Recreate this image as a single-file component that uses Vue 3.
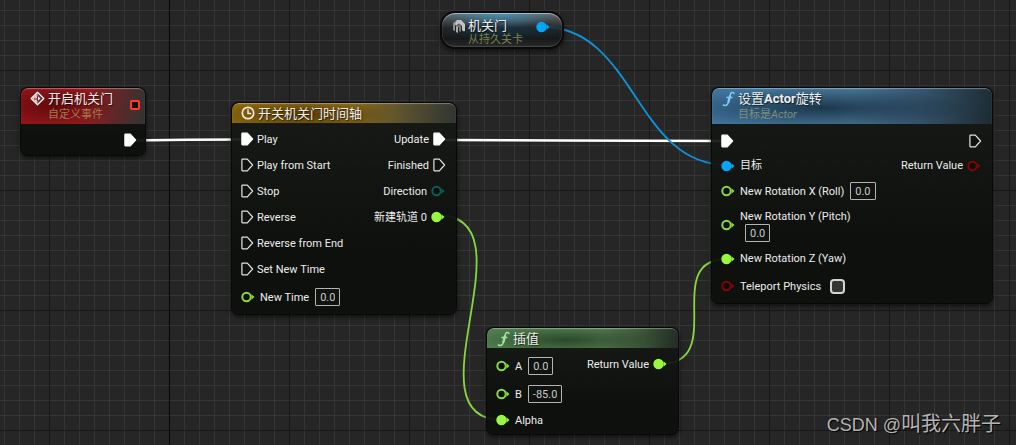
<script setup>
import { ref } from 'vue'

const wires = [
  { kind: 'exec', d: 'M130 140.500C170 140 206 139.500 246 139.500' },
  { kind: 'exec', d: 'M440 140C540 140 620 141 726 141' },
  { kind: 'object', d: 'M543 27C635 27 635 165 727 165' },
  { kind: 'float', d: 'M437 215C537 215 404 420 502 420' },
  { kind: 'float', d: 'M660 364C729 364 660 259 727 259' },
]

const nodes = ref([
  {
    id: 'event',
    title: [{ text: '开启机关门' }],
    subtitle: '自定义事件',
    icon: 'event',
    delegate: true,
    inputs: [],
    outputs: [{ kind: 'exec', linked: true }],
  },
  {
    id: 'timeline',
    title: [{ text: '开关机关门时间轴' }],
    icon: 'clock',
    inputs: [
      { kind: 'exec', linked: true, label: 'Play' },
      { kind: 'exec', label: 'Play from Start' },
      { kind: 'exec', label: 'Stop' },
      { kind: 'exec', label: 'Reverse' },
      { kind: 'exec', label: 'Reverse from End' },
      { kind: 'exec', label: 'Set New Time' },
      { kind: 'float', label: 'New Time', value: '0.0' },
    ],
    outputs: [
      { kind: 'exec', linked: true, label: 'Update' },
      { kind: 'exec', label: 'Finished' },
      { kind: 'enum', label: 'Direction' },
      { kind: 'float', linked: true, label: '新建轨道 0' },
    ],
  },
  {
    id: 'rotate',
    title: [{ text: '设置' }, { text: 'Actor', strong: true }, { text: '旋转' }],
    subtitle: '目标是',
    subject: 'Actor',
    icon: 'function',
    inputs: [
      { kind: 'exec', linked: true },
      { kind: 'object', linked: true, label: '目标' },
      { kind: 'float', label: 'New Rotation X (Roll)', value: '0.0' },
      { kind: 'float', label: 'New Rotation Y (Pitch)', value: '0.0', stacked: true },
      { kind: 'float', linked: true, label: 'New Rotation Z (Yaw)' },
      { kind: 'bool', label: 'Teleport Physics', checked: false },
    ],
    outputs: [{ kind: 'exec' }, { kind: 'bool', label: 'Return Value' }],
  },
  {
    id: 'lerp',
    title: [{ text: '插值' }],
    icon: 'function',
    inputs: [
      { kind: 'float', label: 'A', value: '0.0' },
      { kind: 'float', label: 'B', value: '-85.0' },
      { kind: 'float', linked: true, label: 'Alpha' },
    ],
    outputs: [{ kind: 'float', linked: true, label: 'Return Value' }],
  },
])

const fieldId = (node, i) => `${node.id}-${i}`
</script>

<template>
  <main class="graph">
    <svg class="wires" aria-hidden="true">
      <path v-for="w in wires" :key="w.d" :d="w.d" :class="['wire', w.kind]" />
    </svg>

    <section class="variable">
      <svg class="variable-icon" viewBox="0 0 14 15" aria-hidden="true">
        <path d="M1 4L5 1L8 3V6L5 4L3 6V12L1 11Z" fill="#8b8b8b" />
        <path d="M5 1L9 1L13 5V12L10 13V7L7 4L4 7L3 5Z" fill="#c2c2c2" />
        <path d="M5 7L7 5L9 7V13L7 12V8L5 9Z" fill="#777" />
        <path d="M4 7V13L6 14V8Z" fill="#aaa" />
        <path d="M8 14L10 11L13 14Z" fill="#222" />
      </svg>
      <div class="variable-text">
        <h2 class="title">机关门</h2>
        <p class="subtitle">从持久关卡</p>
      </div>
      <svg class="pin data object linked" viewBox="0 0 14 12" aria-hidden="true">
        <circle cx="5.500" cy="6" r="4.200" />
        <path d="M10.500 3.300L13.500 6L10.500 8.700Z" />
      </svg>
    </section>

    <section v-for="node in nodes" :key="node.id" :class="['node', node.id]">
      <header class="head">
        <svg v-if="node.icon === 'event'" class="icon event-icon" viewBox="0 0 15 15" aria-hidden="true">
          <path d="M7.500 1.200L13.800 7.500L7.500 13.800L1.200 7.500Z" fill="#5c2a2c" stroke="#eee" stroke-width="1.400" stroke-linejoin="round" />
          <path d="M7.500 2V13L2 7.500Z" fill="#d8c8c8" />
          <path d="M4 7.500H7V5L11 7.500L7 10V8.500H4Z" fill="#7c1c20" />
          <path d="M8 5.300L10.500 7.500L8 9.700Z" fill="#f2e8e8" />
        </svg>
        <svg v-else-if="node.icon === 'clock'" class="icon clock-icon" viewBox="0 0 14 14" aria-hidden="true">
          <circle cx="7" cy="7" r="5.700" fill="none" stroke="#eee9dc" stroke-width="1.700" />
          <path d="M7 3.300V7.400H10.200" fill="none" stroke="#eee9dc" stroke-width="1.500" />
        </svg>
        <svg v-else class="icon function-icon" viewBox="0 0 13 16" aria-hidden="true">
          <path d="M12 2.400C10.800 .9 8.900 1.300 8.300 3.600L6.200 11.700C5.600 14.200 3.400 15.200 1.300 14" fill="none" stroke="currentColor" stroke-width="1.500" stroke-linecap="round" />
          <path d="M8.100 4.500L6.300 11.500" fill="none" stroke="currentColor" stroke-width="2.300" />
          <path d="M4.300 6.500H10.400" fill="none" stroke="currentColor" stroke-width="1.300" />
        </svg>
        <div class="head-text">
          <h2 class="title">
            <template v-for="part in node.title" :key="part.text"><strong v-if="part.strong">{{ part.text }}</strong><template v-else>{{ part.text }}</template></template>
          </h2>
          <p v-if="node.subtitle" class="subtitle">{{ node.subtitle }}<em v-if="node.subject">{{ node.subject }}</em></p>
        </div>
        <span v-if="node.delegate" class="delegate"></span>
      </header>

      <div class="body">
        <div v-for="side in ['inputs', 'outputs']" :key="side" :class="['pins', side]">
          <div v-for="(pin, i) in node[side]" :key="i" :class="['row', { field: 'value' in pin, option: 'checked' in pin, stacked: pin.stacked }]">
            <svg v-if="pin.kind === 'exec'" :class="['pin', 'flow', { linked: pin.linked }]" viewBox="0 0 13 14" aria-hidden="true">
              <path d="M1.500 1.200H6.300L11.600 7L6.300 12.800H1.500Q.9 12.800 .9 12.200V1.800Q.9 1.200 1.500 1.200Z" />
            </svg>
            <svg v-else :class="['pin', 'data', pin.kind, { linked: pin.linked }]" viewBox="0 0 14 12" aria-hidden="true">
              <circle cx="5.500" cy="6" r="4.200" />
              <path d="M10.500 3.300L13.500 6L10.500 8.700Z" />
            </svg>
            <div class="row-text">
              <label v-if="'value' in pin || 'checked' in pin" class="label" :for="fieldId(node, i)">{{ pin.label }}</label>
              <span v-else-if="pin.label" class="label">{{ pin.label }}</span>
              <input v-if="'value' in pin" :id="fieldId(node, i)" v-model="pin.value" class="number" type="text" inputmode="decimal" />
              <input v-if="'checked' in pin" :id="fieldId(node, i)" v-model="pin.checked" class="check" type="checkbox" />
            </div>
          </div>
        </div>
      </div>
    </section>

    <p class="watermark">CSDN @<span>叫我六胖子</span></p>
  </main>
</template>

<style>
body {
  margin: 0;
  background: #262626;
}
</style>

<style scoped>
.graph {
  position: relative;
  min-height: 100vh;
  overflow: hidden;
  font: 11px/16px Roboto, "Noto Sans CJK SC", sans-serif;
  color: #ececec;
  background-color: #262626;
  background-image:
    linear-gradient(90deg, #050505 1px, transparent 1px),
    linear-gradient(90deg, #171717 1px, transparent 1px),
    linear-gradient(#171717 1px, transparent 1px),
    linear-gradient(90deg, #353535 1px, transparent 1px),
    linear-gradient(#353535 1px, transparent 1px);
  background-size: 1200px 100%, 120px 120px, 120px 120px, 15px 15px, 15px 15px;
  background-position: 169px 0, 49px 70px, 49px 70px, 4px 10px, 4px 10px;
}

.wires {
  position: absolute;
  inset: 0;
  width: 100%;
  height: 100%;
}

.wire {
  fill: none;
  stroke-width: 1.8;
}

.wire.exec {
  stroke: #fff;
  stroke-width: 2.5;
}

.wire.object {
  stroke: #0d93d9;
}

.wire.float {
  stroke: #87d63b;
}

h2,
p {
  margin: 0;
  font-weight: 400;
}

.title {
  font-size: 13px;
  line-height: 16px;
  color: #ededed;
  white-space: nowrap;
  text-shadow: 1px 1px 1px rgba(0, 0, 0, 0.6);
}

.title strong {
  font-weight: 700;
}

.subtitle {
  font-size: 11px;
  line-height: 15px;
  white-space: nowrap;
}

.node {
  position: absolute;
  box-sizing: border-box;
  border-radius: 7px;
  overflow: hidden;
  background: linear-gradient(rgba(22, 25, 22, 0.93), rgba(12, 15, 12, 0.95) 70%);
  box-shadow: 0 0 0 1px #080808, 0 2px 5px 1px rgba(0, 0, 0, 0.6);
}

.event {
  left: 21px;
  top: 88px;
  width: 124px;
  --row: 16px;
  --field: 16px;
  --gap: 8px;
  --end: 7px;
}

.timeline {
  left: 232px;
  top: 103px;
  width: 224px;
  --row: 16px;
  --field: 20px;
  --gap: 10px;
  --end: 7px;
}

.rotate {
  left: 712px;
  top: 88px;
  width: 280px;
  --row: 17px;
  --field: 18px;
  --gap: 8px;
  --end: 6px;
}

.lerp {
  left: 487px;
  top: 328px;
  width: 191px;
  --row: 16px;
  --field: 20px;
  --gap: 8px;
  --end: 6px;
}

.head {
  display: flex;
  align-items: flex-start;
  box-sizing: border-box;
  height: 20px;
  padding: 3px 4px 0 9px;
  border-radius: 6px 6px 0 0;
  box-shadow: inset 0 1px 1px rgba(255, 255, 255, 0.35);
}

.event .head,
.rotate .head {
  height: 36px;
}

.event .head {
  background:
    radial-gradient(ellipse 60px 22px at 34px 18px, rgba(50, 0, 0, 0.55), transparent),
    linear-gradient(100deg, #951418 0%, #98191d 50%, #5a2929 78%, #303532 100%);
}

.timeline .head {
  background:
    radial-gradient(ellipse 90px 16px at 70px 12px, rgba(50, 32, 0, 0.65), transparent),
    linear-gradient(95deg, #8f6b0c 0%, #8c6b18 52%, #57502f 78%, #303531 100%);
}

.rotate .head {
  background:
    radial-gradient(ellipse 150px 20px at 110px 20px, rgba(10, 30, 45, 0.7), transparent),
    linear-gradient(97deg, #3e729a 0%, #487594 50%, #34526a 75%, #1c2b32 100%);
}

.lerp .head {
  background:
    radial-gradient(ellipse 90px 14px at 80px 12px, rgba(15, 40, 15, 0.6), transparent),
    linear-gradient(95deg, #4e7c4f 0%, #567c52 60%, #3a5236 82%, #222b24 100%);
}

.icon {
  flex: none;
}

.event-icon {
  width: 15px;
  height: 15px;
  margin-right: 3px;
}

.clock-icon {
  width: 14px;
  height: 14px;
  margin-right: 3px;
}

.function-icon {
  width: 13px;
  height: 16px;
  margin: 0 3px 0 1px;
  color: #7cc9fb;
}

.lerp .function-icon {
  color: #a4e6a0;
}

.head-text {
  flex: 1;
}

.event .subtitle {
  color: #a3794f;
}

.rotate .subtitle {
  color: #7d8f7e;
}

.delegate {
  box-sizing: border-box;
  width: 10px;
  height: 10px;
  margin: 9px 1px 0 0;
  border: 2px solid #ff3a37;
  border-radius: 2px;
  background: #240808;
}

.body {
  display: flex;
  justify-content: space-between;
  padding: 8px 10px var(--end) 9px;
}

.event .body {
  justify-content: flex-end;
  padding-right: 8px;
}

.pins {
  display: flex;
  flex-direction: column;
  gap: var(--gap);
}

.row {
  display: flex;
  align-items: center;
  height: var(--row);
  white-space: nowrap;
}

.row.field {
  height: var(--field);
}

.inputs .row.option {
  height: 22px;
}

.row.stacked {
  height: auto;
}

.outputs .row {
  flex-direction: row-reverse;
}

.row-text {
  display: flex;
  align-items: center;
  gap: 6px;
}

.label {
  padding-top: 1px;
}

.stacked .row-text {
  flex-direction: column;
  align-items: flex-start;
  gap: 0;
}

.stacked .label {
  line-height: 15px;
}

.stacked .number {
  margin-left: 5px;
}

.pin {
  flex: none;
  overflow: visible;
}

.flow {
  width: 13px;
  height: 14px;
  margin-right: 3px;
  fill: #101210;
  stroke: #e4e4e4;
  stroke-width: 1.2;
  stroke-linejoin: round;
}

.flow.linked {
  fill: #fff;
  stroke: #fff;
}

.data {
  width: 14px;
  height: 12px;
  margin-right: 5px;
  color: #87dc3c;
}

.outputs .flow {
  margin: 0 0 0 4px;
}

.outputs .data {
  margin: 0 1px 0 4px;
}

.data circle {
  fill: #0b0d0b;
  stroke: currentColor;
  stroke-width: 2;
}

.data path {
  fill: currentColor;
}

.data.linked {
  color: #98f83f;
}

.data.linked circle {
  fill: currentColor;
}

.data.object {
  color: #05a5f5;
}

.data.enum {
  color: #075f58;
}

.data.bool {
  color: #850405;
}

.number {
  box-sizing: border-box;
  field-sizing: content;
  height: 18px;
  padding: 0 4px;
  border: 1px solid #b4b4b4;
  border-radius: 1px;
  background: #111311;
  color: #c8c8c8;
  font: inherit;
}

.check {
  appearance: none;
  width: 15px;
  height: 15px;
  margin: 0 0 0 3px;
  border: 2px solid #d4d4d4;
  border-radius: 4px;
  background: #343434;
}

.check:checked {
  background: #d4d4d4;
}

.variable {
  position: absolute;
  left: 442px;
  top: 13px;
  box-sizing: border-box;
  width: 120px;
  display: flex;
  align-items: flex-start;
  padding: 5px 12px 1px 10px;
  border-radius: 13px;
  background:
    radial-gradient(ellipse 62px 15px at 58px 0, rgba(65, 150, 190, 0.85), transparent),
    radial-gradient(ellipse 60px 12px at 60px 18px, rgba(10, 60, 85, 0.5), transparent),
    linear-gradient(rgba(105, 110, 112, 0.9), rgba(35, 38, 40, 0.85) 45%, rgba(20, 22, 22, 0.85) 75%, rgba(42, 44, 44, 0.85));
  box-shadow: 0 0 0 2px #0a0a0a, 0 3px 5px 2px rgba(0, 0, 0, 0.5), inset 0 1px 1px rgba(255, 255, 255, 0.5), inset 0 -1px 1px rgba(255, 255, 255, 0.15);
}

.variable-icon {
  width: 14px;
  height: 15px;
  margin: 1px 2px 0 0;
}

.variable-text {
  flex: 1;
}

.variable .subtitle {
  color: #80804f;
  line-height: 12px;
}

.variable .pin {
  margin: 3px 0 0;
}

.watermark {
  position: absolute;
  right: 15px;
  bottom: 7px;
  font: 18px/26px "Liberation Sans", "Noto Sans CJK SC", sans-serif;
  color: #b4b4b4;
  text-shadow: 1px 1px 1px #000;
}

.watermark span {
  font-family: "Noto Sans CJK SC", sans-serif;
  font-size: 20px;
}
</style>
